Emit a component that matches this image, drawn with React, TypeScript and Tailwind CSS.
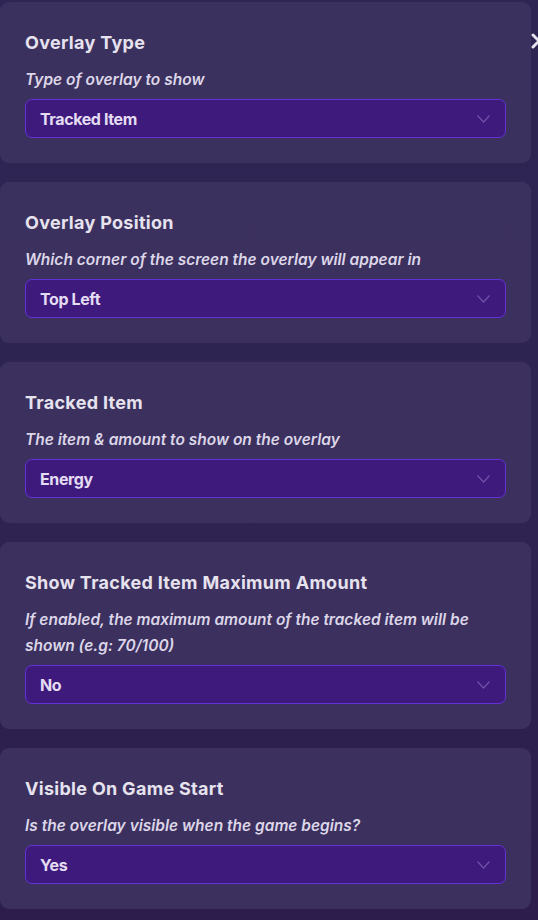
import { X } from 'lucide-react';

interface Field {
  title: string;
  description: string;
  value: string;
}

const fields: Field[] = [
  { title: 'Overlay Type', description: 'Type of overlay to show', value: 'Tracked Item' },
  { title: 'Overlay Position', description: 'Which corner of the screen the overlay will appear in', value: 'Top Left' },
  { title: 'Tracked Item', description: 'The item & amount to show on the overlay', value: 'Energy' },
  {
    title: 'Show Tracked Item Maximum Amount',
    description: 'If enabled, the maximum amount of the tracked item will be shown (e.g: 70/100)',
    value: 'No'
  },
  { title: 'Visible On Game Start', description: 'Is the overlay visible when the game begins?', value: 'Yes' }
];

function Chevron() {
  return (
    <svg width="13" height="8" viewBox="0 0 13 8" fill="none" className="shrink-0">
      <path d="M0.5 0.5L6.5 7L12.5 0.5" stroke="#6e52a8" strokeWidth="1.2" />
    </svg>
  );
}

function FieldCard({ field }: { field: Field }) {
  return (
    <div className="w-[531px] rounded-[9px] bg-[#3c315f]/95 px-[25px] pt-[28px] pb-[25px]">
      <h3 className="text-[18px] leading-[26px] font-bold text-[#e6e2ee] tracking-[0.3px]">
        {field.title}
      </h3>
      <p className="mt-[11px] text-[15.5px] leading-[26px] italic font-semibold text-[#dcd6e8] tracking-[0px] pr-[30px]">
        {field.description}
      </p>
      <button className="mt-[6px] w-[481px] h-[39px] flex items-center justify-between pl-[14px] pr-[15px] rounded-[7px] bg-[#3e1a7d] border border-[#6232d4]">
        <span className="text-[16px] font-bold text-[#e4dcf2] tracking-[-0.4px]">{field.value}</span>
        <Chevron />
      </button>
    </div>
  );
}

export default function App() {
  return (
    <div
      className="relative w-[538px] h-[920px] overflow-hidden bg-gradient-to-b from-[#2f2554] via-[#2e2452] to-[#2c1d4c]"
      style={{ fontFamily: 'Inter, "Noto Sans", sans-serif' }}
    >
      <div className="flex flex-col gap-[19px] pt-[2px]">
        {fields.map((f) => (
          <FieldCard key={f.title} field={f} />
        ))}
      </div>

      {/* close button, mostly off-screen */}
      <button className="absolute left-[527px] top-[29px] text-[#e6e2ee]">
        <X className="w-[24px] h-[24px]" strokeWidth={3} />
      </button>
    </div>
  );
}
